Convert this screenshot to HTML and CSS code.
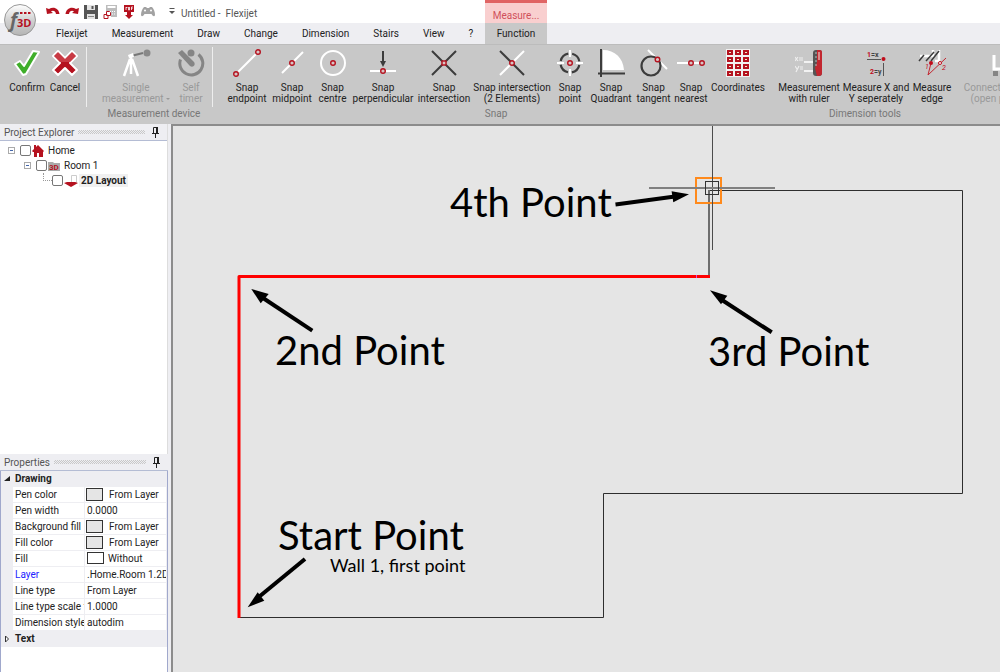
FILE: index.html
```html
<!DOCTYPE html>
<html lang="en">
<head>
  <meta charset="UTF-8">
  <meta name="viewport" content="width=device-width, initial-scale=1.0">
  <title>Untitled - Flexijet</title>
  <link rel="stylesheet" href="styles.css">
</head>
<body>
  <div class="app">
    <header class="top">
      <button class="logo" aria-label="Flexijet 3D">
        <svg width="34" height="34" viewBox="0 0 34 34">
          <defs>
            <linearGradient id="ball" x1="0" y1="0" x2="0" y2="1">
              <stop offset="0" stop-color="#fff"/>
              <stop offset="0.5" stop-color="#d2d2d2"/>
              <stop offset="1" stop-color="#b4b4b4"/>
            </linearGradient>
          </defs>
          <circle cx="17" cy="17" r="15.5" fill="url(#ball)" stroke="#999"/>
          <path d="M17 10h2.500M21 10h2.500M25 10h2.500" stroke="#b5121f" stroke-width="2"/>
          <text x="7" y="24" class="logo-f">f</text>
          <text x="14" y="24" class="logo-3d">3D</text>
        </svg>
      </button>
      <div class="quick">
        <button aria-label="Undo">
          <svg width="14" height="14" viewBox="0 0 14 14"><path d="M0 3l1 6 6-1-2-1.500c2-1.500 4.500-.5 5 2.500h3.500c-.5-5.500-6-8-10.500-5z" fill="#b5121f"/></svg>
        </button>
        <button aria-label="Redo">
          <svg width="14" height="14" viewBox="0 0 14 14"><path d="M14 3l-1 6-6-1 2-1.500c-2-1.500-4.500-.5-5 2.500H.5c.5-5.500 6-8 10.500-5z" fill="#b5121f"/></svg>
        </button>
        <button aria-label="Save">
          <svg width="14" height="14" viewBox="0 0 14 14"><path d="M0 0h14v14H0z" fill="#555"/><path d="M3 0h8v5H3zM3 9h8v5H3z" fill="#e4e4e4"/><path d="M7.500 1h2v3h-2z" fill="#555"/><path d="M4 11.500h6" stroke="#888"/></svg>
        </button>
        <button aria-label="Calculator">
          <svg width="14" height="14" viewBox="0 0 14 14"><path d="M3 0h11v12H8V6H3z" fill="#bdbdbd"/><path d="M4.500 2h8" stroke="#fff" stroke-width="2"/><path d="M9 6.500h4M9 9h4" stroke="#fff" stroke-dasharray="1 1"/><path d="M3.500 6.500h3l1 1v3h-4zM1 9.500h3l1 1v3H1z" fill="#fff" stroke="#b5121f"/></svg>
        </button>
        <button aria-label="PDF export">
          <svg width="14" height="14" viewBox="0 0 14 14"><path d="M2 0h10v7H9v3h2l-4 4-4-4h2V7H2z" fill="#b5121f"/><path d="M4 2v3M4 2.500h1.500M6.500 2v3h1V2M9.500 5V2H11M9.500 3.500h1" stroke="#fff" fill="none" stroke-width=".8"/></svg>
        </button>
        <button aria-label="Controller">
          <svg width="14" height="14" viewBox="0 0 14 14"><path d="M3 2h2l1 1h2l1-1h2c2 2 3 5 3 8-.5 2-2 1.500-3.500-1h-7C2 11.500.5 12 0 10c0-3 1-6 3-8z" fill="#a2a2a2"/><circle cx="4" cy="5.500" r="1" fill="#fff"/><circle cx="10" cy="5.500" r="1" fill="#fff"/></svg>
        </button>
        <button class="more" aria-label="Customize">
          <svg width="8" height="8" viewBox="0 0 8 8"><path d="M1.500 .5h5" stroke="#555"/><path d="M1 3h6L4 6z" fill="#555"/></svg>
        </button>
        <span class="title">Untitled - &nbsp;Flexijet</span>
      </div>
      <nav class="tabs">
        <button>Flexijet</button>
        <button>Measurement</button>
        <button>Draw</button>
        <button>Change</button>
        <button>Dimension</button>
        <button>Stairs</button>
        <button>View</button>
        <button>?</button>
      </nav>
      <div class="context">
        <span>Measure...</span>
        <button>Function</button>
      </div>
    </header>

    <div class="ribbon">
      <section class="group confirm">
        <div class="tools">
          <button>
            <svg width="28" height="28" viewBox="0 0 28 28"><path d="M2 15l5-3 4 5L20 2l6 1-13 22-3 1z" fill="#3fae2a" stroke="#fff" stroke-width="2" stroke-linejoin="round"/></svg>
            Confirm
          </button>
          <button>
            <svg width="28" height="28" viewBox="0 0 28 28"><path d="M7 2l7 7 7-7 5 5-7 7 7 7-5 5-7-7-7 7-5-5 7-7-7-7z" fill="#b5121f" stroke="#fff" stroke-width="2" stroke-linejoin="round"/><path d="M7 3l7 7 7-7 4 4-6 6H9L3 7z" fill="#c83a44"/></svg>
            Cancel
          </button>
        </div>
      </section>
      <section class="group device">
        <div class="tools">
          <button disabled>
            <svg width="32" height="28" viewBox="0 0 32 28"><path d="M11 7l12-3" stroke="#777" stroke-width="2"/><circle cx="27" cy="4" r="3.500" fill="#888"/><path d="M8 6l5-2 1 4-5 1z" fill="#fff"/><path d="M11 8v17M10 10L4 27M12 10l6 17" stroke="#fff" stroke-width="2.500" fill="none"/></svg>
            <span>Single<br>measurement <i class="caret"></i></span>
          </button>
          <button disabled>
            <svg width="28" height="28" viewBox="0 0 28 28"><path d="M21.500 5.500a11.500 11.500 0 1 1-18 5" fill="none" stroke="#858585" stroke-width="3"/><circle cx="14" cy="4" r="3.500" fill="#858585"/><path d="M1 4l4-3 12 12c2 3-1 6-4 4z" fill="#858585"/></svg>
            <span>Self<br>timer</span>
          </button>
        </div>
        <h2>Measurement device</h2>
      </section>
      <section class="group snap">
        <div class="tools">
          <button>
            <svg width="28" height="28" viewBox="0 0 28 28"><path d="M5 23L23 5" stroke="#fff" stroke-width="2"/><g class="dot"><circle cx="3" cy="25" r="2.300"/><circle cx="25" cy="3" r="2.300"/></g></svg>
            <span>Snap<br>endpoint</span>
          </button>
          <button>
            <svg width="28" height="28" viewBox="0 0 28 28"><path d="M4 24L25 3" stroke="#fff" stroke-width="2"/><circle class="dot" cx="14" cy="14" r="2.300"/></svg>
            <span>Snap<br>midpoint</span>
          </button>
          <button>
            <svg width="28" height="28" viewBox="0 0 28 28"><circle cx="14" cy="14" r="12" fill="none" stroke="#fff" stroke-width="2"/><circle class="dot" cx="14" cy="14" r="2.300"/></svg>
            <span>Snap<br>centre</span>
          </button>
          <button>
            <svg width="28" height="28" viewBox="0 0 28 28"><path d="M1 22h26" stroke="#fff" stroke-width="2"/><path d="M14 2v13" stroke="#3c3c3c" stroke-width="2"/><path d="M11 12h6l-3 6z" fill="#3c3c3c"/><circle class="dot" cx="14" cy="22" r="2.300"/></svg>
            <span>Snap<br>perpendicular</span>
          </button>
          <button>
            <svg width="28" height="28" viewBox="0 0 28 28"><path d="M2 2l24 24M26 2L2 26" stroke="#3c3c3c" stroke-width="2"/><rect class="dot" x="12" y="12" width="4" height="4"/></svg>
            <span>Snap<br>intersection</span>
          </button>
          <button>
            <svg width="28" height="28" viewBox="0 0 28 28"><path d="M26 2L2 26" stroke="#fff" stroke-width="2"/><path d="M2 2l24 24" stroke="#3c3c3c" stroke-width="2"/><circle class="dot" cx="14" cy="14" r="2.300"/></svg>
            <span>Snap intersection<br>(2 Elements)</span>
          </button>
          <button>
            <svg width="28" height="28" viewBox="0 0 28 28"><circle cx="14" cy="14" r="9.500" fill="none" stroke="#3c3c3c" stroke-width="2.200" stroke-dasharray="10.900 4" stroke-dashoffset="-2"/><path d="M14 1v7M14 20v7M1 14h7M20 14h7" stroke="#fff" stroke-width="2"/><circle class="dot" cx="14" cy="14" r="2.300"/></svg>
            <span>Snap<br>point</span>
          </button>
          <button>
            <svg width="28" height="28" viewBox="0 0 28 28"><path d="M6 1c12 0 20 8 21 20H6z" fill="#fff"/><path d="M4 0v28M1 24.500h27" stroke="#3c3c3c" stroke-width="2"/></svg>
            <span>Snap<br>Quadrant</span>
          </button>
          <button>
            <svg width="28" height="28" viewBox="0 0 28 28"><path d="M8 1l19 19" stroke="#fff" stroke-width="2"/><circle cx="11" cy="17" r="9.500" fill="none" stroke="#3c3c3c" stroke-width="2.200"/><circle class="dot" cx="17.500" cy="10.500" r="2.300"/></svg>
            <span>Snap<br>tangent</span>
          </button>
          <button>
            <svg width="28" height="28" viewBox="0 0 28 28"><path d="M0 14h25" stroke="#fff" stroke-width="2"/><g class="dot"><circle cx="14" cy="14" r="2.300"/><circle cx="25" cy="14" r="2.300"/></g></svg>
            <span>Snap<br>nearest</span>
          </button>
          <button>
            <svg width="28" height="28" viewBox="0 0 28 28"><path d="M2 0h24v28H2z" fill="#f2f2f2"/><path d="M3 3.500h22M3 10.500h22M3 17.500h22M3 24.500h22" stroke="#b5121f" stroke-width="5" stroke-dasharray="6 2"/><path d="M5 3.500h20M5 10.500h20M5 17.500h20M5 24.500h20" stroke="#eec" stroke-dasharray="2 6"/></svg>
            <span>Coordinates</span>
          </button>
        </div>
        <h2>Snap</h2>
      </section>
      <section class="group dims">
        <div class="tools">
          <button>
            <svg width="28" height="28" viewBox="0 0 28 28"><path d="M9 13h10M9 22h10" stroke="#fff" stroke-width="1.500"/><path d="M0 8l3 4M3 8l-3 4M4 9h4M4 11h4M0 17l2 3M4 17l-3 6M5 18h3M5 20h3" stroke="#eee" stroke-width="1.200"/><rect x="18" y="1" width="9" height="26" rx="3" fill="#555"/><path d="M22 1h3a2 2 0 0 1 2 2v21a3 3 0 0 1-3 3h-2l-2-8 2-6z" fill="#c2262f"/><path d="M24 3v8" stroke="#d98a8a" stroke-width="2"/><path d="M20 4h2M20 8h2M20 12h2M20 16h2" stroke="#bbb"/></svg>
            <span>Measurement<br>with ruler</span>
          </button>
          <button>
            <svg width="28" height="28" viewBox="0 0 28 28"><path d="M5 10.500h14M21.500 14v13" stroke="#555"/><circle cx="21.500" cy="10" r="2" fill="#c00c1a"/><text class="eq" x="5" y="8"><tspan>1</tspan>=x</text><text class="eq" x="8" y="25"><tspan>2</tspan>=y</text></svg>
            <span>Measure X and<br>Y seperately</span>
          </button>
          <button>
            <svg width="28" height="28" viewBox="0 0 28 28"><path d="M2 7h13V1M21 1v11h-4" stroke="#fff" stroke-width="2.500" fill="none"/><path d="M1 12l5-6M8 12L16 3M13 12L21 2" stroke="#3c3c3c" stroke-width="1.500"/><path d="M13 14l-3 12L28 9" stroke="#c2262f" fill="none"/><circle cx="13" cy="14" r="2" fill="#c00c1a"/><circle cx="22" cy="14" r="1.500" fill="#fff" stroke="#c00c1a"/><text class="edge" x="7" y="20">1</text><text class="edge" x="24" y="21">2</text></svg>
            <span>Measure<br>edge</span>
          </button>
        </div>
        <h2>Dimension tools</h2>
      </section>
      <section class="group connect">
        <div class="tools">
          <button disabled>
            <svg width="28" height="28" viewBox="0 0 28 28"><path d="M4 6v14h16" stroke="#fff" stroke-width="3" fill="none"/><path d="M3 22h5v5H3zM10 24h3v3h-3z" fill="#858585"/></svg>
            <span>Connect elements<br>(open polygon)</span>
          </button>
        </div>
      </section>
    </div>

    <main class="work">
      <aside class="side">
        <section class="explorer">
          <h3>Project Explorer<i class="grip"></i><svg width="7" height="11" viewBox="0 0 7 11"><path d="M1.500 6V.5h4V6M0 6.500h7M3.500 6.500V11" fill="none" stroke="#222"/><path d="M4 0h2v6H4z" fill="#222"/></svg></h3>
          <ul class="tree">
            <li class="node"><i class="toggle"></i><input type="checkbox" id="home"><svg width="12" height="12" viewBox="0 0 12 12"><path d="M0 6l2-2V0h2v2l2-2 6 6-1 1v5H7V8H5v4H2V7H1z" fill="#b5121f"/></svg><label for="home">Home</label></li>
            <li class="node level1"><i class="toggle"></i><input type="checkbox" id="room"><svg width="12" height="12" viewBox="0 0 12 12"><path d="M0 2h5l1 1h6v8H0z" fill="#aaa"/><text class="folder" x="1" y="10">3D</text></svg><label for="room">Room 1</label></li>
            <li class="node level2"><i class="branch"></i><input type="checkbox" id="layout"><svg width="14" height="12" viewBox="0 0 14 12"><path d="M7.500 .5h5v7h-5z" fill="#fff" stroke="#ccc"/><path d="M0 8l3-1h8l3 1-7 4z" fill="#b5121f"/></svg><label for="layout">2D Layout</label></li>
          </ul>
        </section>
        <section class="properties">
          <h3>Properties<i class="grip"></i><svg width="7" height="11" viewBox="0 0 7 11"><path d="M1.500 6V.5h4V6M0 6.500h7M3.500 6.500V11" fill="none" stroke="#222"/><path d="M4 0h2v6H4z" fill="#222"/></svg></h3>
          <div class="sheet">
            <table>
              <colgroup><col class="gutter"><col class="name"><col></colgroup>
              <tr class="head"><td><svg width="6" height="6" viewBox="0 0 6 6"><path d="M6 0v5H0z" fill="#222"/></svg></td><th colspan="2">Drawing</th></tr>
              <tr><td></td><th>Pen color</th><td><i class="swatch"></i>From Layer</td></tr>
              <tr><td></td><th>Pen width</th><td>0.0000</td></tr>
              <tr><td></td><th>Background fill</th><td><i class="swatch"></i>From Layer</td></tr>
              <tr><td></td><th>Fill color</th><td><i class="swatch"></i>From Layer</td></tr>
              <tr><td></td><th>Fill</th><td><i class="swatch none"></i>Without</td></tr>
              <tr><td></td><th class="link">Layer</th><td>.Home.Room 1.2D Layout</td></tr>
              <tr><td></td><th>Line type</th><td>From Layer</td></tr>
              <tr><td></td><th>Line type scale factor</th><td>1.0000</td></tr>
              <tr><td></td><th>Dimension style</th><td>autodim</td></tr>
              <tr class="head"><td><svg width="6" height="8" viewBox="0 0 6 8"><path d="M1.500 1v6l3-3z" fill="#fff" stroke="#333"/></svg></td><th colspan="2">Text</th></tr>
            </table>
          </div>
        </section>
      </aside>

      <div class="canvas">
        <svg width="100%" height="100%">
          <!-- remaining room outline -->
          <path d="M66 491.500H430.500V367.500H789.500V64.500H536" fill="none" stroke="#2e2e2e"/>
          <path d="M536 64v86" stroke="#6e6e6e" stroke-width="2"/>
          <!-- measured walls -->
          <path d="M66 492V150.500H537" fill="none" stroke="#f00" stroke-width="3" stroke-linejoin="round"/>
          <path d="M523.500 149v3" stroke="#d050e0"/>
          <!-- snap cursor -->
          <rect x="523" y="52" width="25" height="25" fill="none" stroke="#ff8a1c" stroke-width="2"/>
          <path d="M539.500 0v124" stroke="#4c4c4c"/>
          <path d="M476 62h126" stroke="#808080" stroke-width="2"/>
          <rect x="532.500" y="55.500" width="13" height="13" fill="none" stroke="#333"/>
          <!-- arrows -->
          <g class="arrow">
            <path d="M442.500 78.500L502 70.500"/><path d="M516 68.300L498.600 65.300 500.300 76.300z"/>
            <path d="M139.300 204.700L90 172"/><path d="M78.300 163L95.700 168 87.700 177.300z"/>
            <path d="M598.700 206.300L549 174"/><path d="M537 164.300L554.300 169.700 548 178.300z"/>
            <path d="M132 433L87 470"/><path d="M74.700 481.300L84.700 466.300 91.300 474.700z"/>
          </g>
          <text class="mark" x="277" y="91">4th Point</text>
          <text class="mark" x="102" y="239">2nd Point</text>
          <text class="mark" x="535" y="240">3rd Point</text>
          <text class="mark" x="105" y="424">Start Point</text>
          <text class="note" x="157" y="446">Wall 1, first point</text>
        </svg>
      </div>
    </main>
  </div>
</body>
</html>
```
FILE: styles.css
```css
* {
  box-sizing: border-box;
  margin: 0;
  padding: 0;
}
body {
  font: 10px/11px Roboto, "Open Sans", sans-serif;
  color: #222;
  background: #eeeef2;
}
button {
  font: inherit;
  color: inherit;
  background: none;
  border: 0;
}
svg {
  display: block;
}
i {
  font-style: normal;
}
.app {
  display: flex;
  flex-direction: column;
  height: 100vh;
  overflow: hidden;
}

/* title bar and tabs */
.top {
  display: grid;
  grid-template-columns: 44px 441px 62px 1fr;
  grid-template-rows: 23px 21px;
  flex: none;
  background: linear-gradient(#fff 23px, #eeeef2 23px);
}
.logo {
  grid-row: 1 / 3;
  padding: 3px 0 0 3px;
  align-self: start;
}
.logo-f {
  font: italic bold 19px "Open Sans", sans-serif;
  fill: #666;
}
.logo-3d {
  font: bold 11px "Open Sans", sans-serif;
  fill: #b5121f;
}
.quick {
  display: flex;
  align-items: center;
  gap: 5px;
  padding-left: 2px;
}
.quick .more {
  margin-left: 8px;
}
.title {
  padding-top: 4px;
  color: #555;
  white-space: pre;
}
.tabs {
  grid-row: 2;
  grid-column: 2;
  display: flex;
}
.tabs button {
  padding: 0 12px;
}
.context {
  grid-row: 1 / 3;
  grid-column: 3;
  display: grid;
  grid-template-rows: 23px 21px;
  text-align: center;
  background: #c8c8c8;
}
.context span {
  padding-top: 7px;
  color: #d0505a;
  background: #f9cfcf;
  border-top: 3px solid #e06464;
}

/* ribbon */
.ribbon {
  display: flex;
  flex: none;
  height: 80px;
  background: #c8c8c8;
  border-top: 1px solid #bcbcbc;
  overflow: hidden;
}
.group {
  display: flex;
  flex: none;
  flex-direction: column;
}
.group h2 {
  font-size: 10px;
  font-weight: normal;
  color: #777;
  text-align: center;
}
.tools {
  display: grid;
  height: 63px;
}
.tools button {
  display: flex;
  flex-direction: column;
  align-items: center;
  gap: 5px;
  padding-top: 4px;
  white-space: nowrap;
}
.tools button:disabled {
  color: #999;
}
.confirm,
.device {
  border-right: 1px solid #eee;
  border-image: linear-gradient(transparent 3px, #eee 3px, #eee 61px, transparent 61px) 1;
}
.confirm {
  padding: 0 2px 0 8px;
}
.confirm .tools {
  grid-template-columns: 38px 38px;
}
.device {
  padding: 0 3px 0 12px;
}
.device .tools {
  grid-template-columns: 74px 36px;
}
.snap {
  padding-left: 12px;
}
.snap .tools {
  grid-template-columns: 44px 46px 35px 66px 56px 80px 36px 46px 39px 36px 58px;
}
.dims {
  padding-left: 9px;
}
.dims .tools {
  grid-template-columns: 66px 68px 44px;
}
.connect {
  padding-left: 10px;
}
.connect .tools button {
  width: 80px;
}
.caret {
  display: inline-block;
  border: 2px solid transparent;
  border-top-color: #999;
}
.dot {
  fill: #d8c4c4;
  stroke: #b5121f;
  stroke-width: 1.4px;
}
.eq {
  font: bold 7px Roboto, sans-serif;
  fill: #444;
}
.eq tspan,
.edge {
  fill: #c00c1a;
}
.edge {
  font: italic 7px Roboto, sans-serif;
}

/* side panels */
.work {
  display: flex;
  flex: 1;
  min-height: 0;
}
.side {
  display: flex;
  flex: none;
  flex-direction: column;
  width: 171px;
  padding-right: 3px;
}
.side h3 {
  display: flex;
  align-items: center;
  height: 17px;
  padding: 0 8px 0 4px;
  font-size: 10px;
  font-weight: normal;
  color: #555;
  background: #eeeef2;
  border-bottom: 1px solid #b4bcd4;
}
.grip {
  flex: 1;
  height: 4px;
  margin: 0 7px 0 4px;
  background: repeating-conic-gradient(#c8c8c8 0 25%, #eeeef2 0 50%) 0 0 / 2px 2px;
}
.explorer {
  display: flex;
  flex: 1;
  flex-direction: column;
  border-right: 1px solid #ddd;
  background: #fff;
}
.tree {
  padding: 2px 0 0 8px;
  list-style: none;
}
.node {
  display: flex;
  align-items: center;
  height: 15px;
}
.level1 {
  padding-left: 16px;
}
.level2 {
  padding-left: 35px;
}
.node label {
  padding: 1px 2px;
  margin-left: 2px;
}
.level2 label {
  margin-left: 1px;
  font-weight: bold;
  background: #f0f0f0;
}
.node input {
  appearance: none;
  width: 11px;
  height: 11px;
  margin-right: 1px;
  border: 1px solid #777;
  border-radius: 2px;
  background: #fff;
}
.folder {
  font: bold 8px Roboto, sans-serif;
  fill: #b5121f;
}
.toggle {
  width: 7px;
  height: 7px;
  margin-right: 5px;
  border: 1px solid #aaa;
  background: linear-gradient(#46a, #46a) center / 3px 1px no-repeat;
}
.branch {
  align-self: start;
  width: 9px;
  height: 8px;
  border-left: 1px dotted #999;
  border-bottom: 1px dotted #999;
}
.properties {
  height: 218px;
}
.sheet {
  height: 201px;
  background: #fff;
  border-left: 1px solid #a0a8cc;
  border-right: 1px solid #a0a8cc;
}
table {
  width: 100%;
  table-layout: fixed;
  border-spacing: 0;
}
.gutter {
  width: 12px;
}
.name {
  width: 72px;
}
th,
td {
  height: 16px;
  padding: 0 0 0 2px;
  overflow: hidden;
  line-height: 15px;
  font-weight: normal;
  text-align: left;
  white-space: nowrap;
  border-bottom: 1px solid #eeeef2;
  border-right: 1px solid #eeeef2;
}
td:first-child,
.head th {
  background: #eeeef2;
}
td:first-child {
  padding-left: 3px;
}
.head th {
  font-weight: bold;
}
.link {
  color: #22f;
}
.swatch {
  display: inline-block;
  width: 17px;
  height: 13px;
  margin: 1px 6px 0 -1px;
  vertical-align: top;
  background: #e5e5e5;
  border: 1px solid #333;
}
.swatch.none {
  height: 12px;
  margin: 1px 4px 0 0;
  background: #fff;
}

/* drawing area */
.canvas {
  flex: 1;
  min-width: 0;
  background: #e5e5e5;
  border-top: 2px solid #8c8c8c;
  border-left: 2px solid #8c8c8c;
}
.arrow {
  fill: #000;
  stroke: #000;
}
.arrow path:nth-child(odd) {
  stroke-width: 4px;
}
.arrow path:nth-child(even) {
  stroke: none;
}
.mark {
  font: 40px Lato, sans-serif;
}
.note {
  font: 18px Lato, sans-serif;
}
```
